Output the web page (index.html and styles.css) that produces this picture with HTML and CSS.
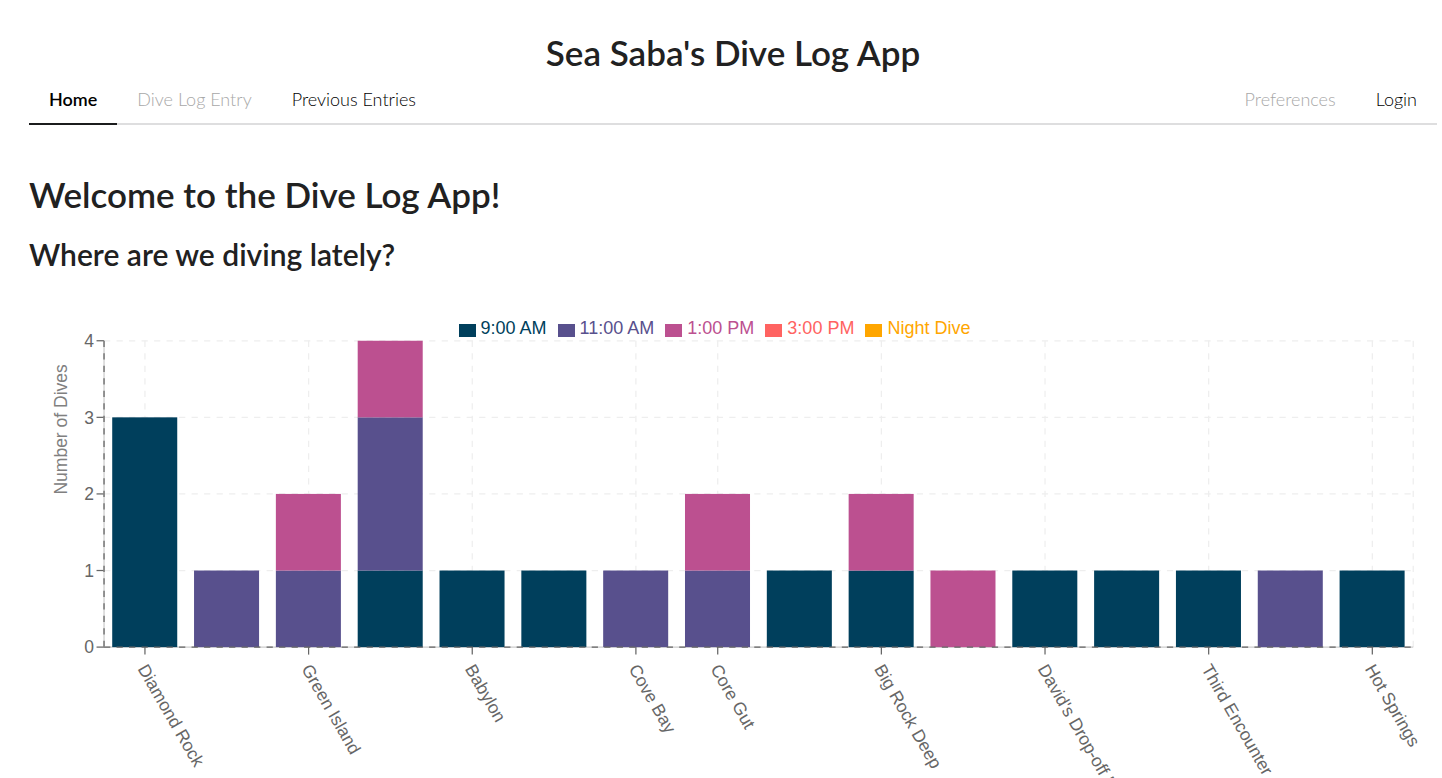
FILE: index.html
```html
<!DOCTYPE html>
<html lang="en">
<head>
<meta charset="utf-8">
<meta name="viewport" content="width=device-width, initial-scale=1">
<title>Sea Saba's Dive Log App</title>
<link rel="stylesheet" href="styles.css">
</head>
<body>
<div class="app">
  <header>
    <h1 class="brand">Sea Saba's Dive Log App</h1>
    <nav class="menu">
      <a class="item active" href="#home">Home</a>
      <a class="item disabled" href="#entry" aria-disabled="true">Dive Log Entry</a>
      <a class="item" href="#previous">Previous Entries</a>
      <a class="item disabled push" href="#preferences" aria-disabled="true">Preferences</a>
      <a class="item" href="#login">Login</a>
    </nav>
  </header>
  <main>
    <h1 class="welcome">Welcome to the Dive Log App!</h1>
    <h2 class="question">Where are we diving lately?</h2>
    <section class="chart">
      <ul class="legend">
        <li class="am9">9:00 AM</li>
        <li class="am11">11:00 AM</li>
        <li class="pm1">1:00 PM</li>
        <li class="pm3">3:00 PM</li>
        <li class="night">Night Dive</li>
      </ul>
      <svg class="plot" viewBox="0 0 1126 400" role="img" aria-label="Number of dives per site">
        <g id="grid" class="grid"></g>
        <g id="axes" class="axes"></g>
        <g id="bars"></g>
        <g id="ticks" class="ticks"></g>
        <text class="axis-title" transform="translate(30 126) rotate(-90)">Number of Dives</text>
      </svg>
    </section>
  </main>
</div>
<script src="chart.js"></script>
</body>
</html>
```
FILE: styles.css
```css
* { box-sizing: border-box; }

html { scrollbar-width: none; }

body {
  margin: 0;
  background: #fff;
  color: #212121;
  font-family: Lato, "Liberation Sans", sans-serif;
  font-size: 18px;
  overflow-x: hidden;
}

.app { padding: 30px 5px 0 29px; }

h1, h2 { margin: 0; font-weight: 600; }

.brand {
  margin-bottom: 2px;
  font-size: 35px;
  line-height: 44px;
  text-align: center;
}

.menu {
  display: flex;
  border-bottom: 2px solid #dededf;
}

.item {
  margin-bottom: -2px;
  padding: 13px 20px 14px;
  border-bottom: 2px solid transparent;
  color: #000;
  font-weight: 300;
  line-height: 20px;
  text-decoration: none;
}

.item.active {
  border-color: #1b1c1d;
  font-weight: 600;
}

.item.disabled { color: #a8a8a8; }
.push { margin-left: auto; }

.welcome {
  margin-top: 47px;
  font-size: 35px;
  line-height: 44px;
}

.question {
  margin-top: 19px;
  font-size: 30px;
  line-height: 38px;
}

.chart {
  margin-top: 47px;
  font-family: "Liberation Sans", Arial, sans-serif;
}

.legend {
  display: flex;
  justify-content: center;
  gap: 11px;
  margin: 0;
  padding: 0 37px 0 0;
  list-style: none;
  font-size: 18px;
  line-height: 17px;
}

.legend li {
  display: flex;
  align-items: center;
  gap: 5px;
}

.legend li::before {
  content: "";
  width: 17px;
  height: 13px;
  margin-top: 3px;
  background: currentColor;
}

.am9 { color: #003f5c; fill: #003f5c; }
.am11 { color: #58508d; fill: #58508d; }
.pm1 { color: #bc5090; fill: #bc5090; }
.pm3 { color: #ff6361; fill: #ff6361; }
.night { color: #ffa600; fill: #ffa600; }

.plot {
  display: block;
  width: 100%;
  height: auto;
  overflow: visible;
  font-size: 14px;
}

.grid line { stroke: #eee; stroke-dasharray: 5 5; }
.axes line { stroke: #666; }
.axes .rule { stroke-dasharray: 5 5; }
.axes .base { stroke: #ccc; }
.ticks text { fill: #666; }
.axis-title { fill: #808080; }
.ticks .count { text-anchor: end; }
```
FILE: chart.js
```js
const series = ["am9", "am11", "pm1"];
// Dives at each site: 9:00 AM, 11:00 AM, 1:00 PM. Only some bands carry a label.
const sites = [
  ["Diamond Rock", 3, 0, 0], ["", 0, 1, 0], ["Green Island", 0, 1, 1], ["", 1, 2, 1],
  ["Babylon", 1, 0, 0], ["", 1, 0, 0], ["Cove Bay", 0, 1, 0], ["Core Gut", 0, 1, 1],
  ["", 1, 0, 0], ["Big Rock Deep", 1, 0, 1], ["", 0, 0, 1], ["David's Drop-off Deep", 1, 0, 0],
  ["", 1, 0, 0], ["Third Encounter", 1, 0, 0], ["", 0, 1, 0], ["Hot Springs", 1, 0, 0]
];
const left = 60, right = 1107, top_ = 3, bottom = 248, most = 4;
const band = (right - left) / sites.length;
const y = n => bottom - n * (bottom - top_) / most;

function add(parent, name, attrs, text) {
  const el = document.createElementNS("http://www.w3.org/2000/svg", name);
  for (const key in attrs) el.setAttribute(key, attrs[key]);
  if (text) el.textContent = text;
  document.getElementById(parent).appendChild(el);
}
const line = (parent, x1, y1, x2, y2, cls = "") =>
  add(parent, "line", { x1, y1, x2, y2, class: cls });

for (let n = 0; n <= most; n++) {
  line("grid", left, y(n), right, y(n));
  line("axes", left - 6, y(n), left, y(n));
  add("ticks", "text", { x: left - 8, y: y(n) + 5, class: "count" }, String(n));
}
line("grid", left, top_, left, bottom);
line("grid", right, top_, right, bottom);
line("axes", left, top_, left, bottom, "base");
line("axes", left, top_, left, bottom, "rule");
line("axes", left, bottom, right, bottom, "base");

sites.forEach(([name, ...counts], i) => {
  const x = left + i * band, mid = x + band / 2;
  let sum = 0;
  counts.forEach((count, s) => {
    if (!count) return;
    sum += count;
    add("bars", "rect", {
      x: x + band / 10, y: y(sum), width: 52,
      height: y(sum - count) - y(sum), class: series[s]
    });
  });
  if (name) {
    line("grid", mid, top_, mid, bottom);
    line("axes", mid, bottom, mid, bottom + 6);
    add("ticks", "text", {
      transform: `translate(${mid} ${bottom + 8}) rotate(60)`, x: 5, y: 10
    }, name);
  }
});
add("ticks", "line", {
  x1: left, y1: bottom, x2: right, y2: bottom,
  stroke: "#666", "stroke-dasharray": "5 5"
});
```
